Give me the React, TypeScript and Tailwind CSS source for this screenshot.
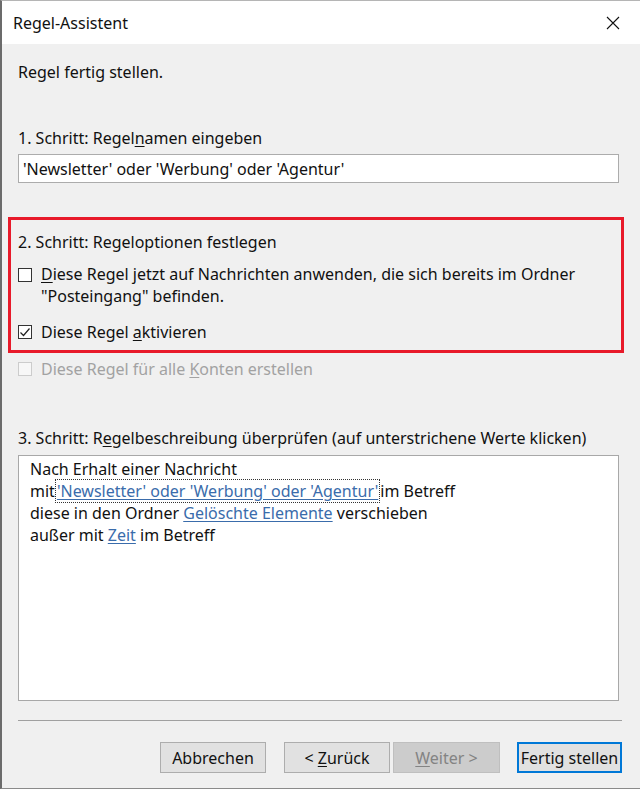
import React from "react";

const font = { fontFamily: '"Noto Sans", "Open Sans", sans-serif' };

function Box({ checked, disabled }: { checked?: boolean; disabled?: boolean }) {
  return (
    <div
      className={
        "w-[14px] h-[14px] shrink-0 border flex items-center justify-center " +
        (disabled ? "border-[#cccccc] bg-[#f7f7f7]" : "border-[#333333] bg-white")
      }
    >
      {checked && (
        <svg width="12" height="12" viewBox="0 0 12 12">
          <polyline points="1.5,6.5 4.5,9.5 10.5,2.5" fill="none" stroke="#222" strokeWidth="1.2" />
        </svg>
      )}
    </div>
  );
}

export default function App() {
  return (
    <div
      style={font}
      className="w-[640px] h-[789px] bg-[#f0f0f0] border-l-2 border-l-[#6b6b6b] border-t border-t-[#b5b5b5] border-b border-b-[#8a8a8a] flex flex-col text-[16px] leading-[22px] text-[#111]"
    >
      <div className="h-[43px] bg-white flex items-center justify-between pl-[11px] pr-[20px] shrink-0">
        <span className="text-[16px]">Regel-Assistent</span>
        <svg width="14" height="14" viewBox="0 0 14 14">
          <path d="M1 1 L13 13 M13 1 L1 13" stroke="#111" strokeWidth="1.1" />
        </svg>
      </div>
      <div className="flex flex-col pl-[16px] pr-[18px] pt-[17px]">
        <div>Regel fertig stellen.</div>
        <div className="mt-[44px]">
          1. Schritt: Regel<span className="underline underline-offset-2">n</span>amen eingeben
        </div>
        <div className="mt-[5px] mr-[3px] h-[29px] bg-white border border-[#acacac] flex items-center pl-[4px]">
          'Newsletter' oder 'Werbung' oder 'Agentur'
        </div>
        <div className="mt-[34px] -ml-[10px] -mr-[2px] border-[3px] border-[#e81a2a] pl-[7px] pt-[11px] pb-[7px]">
          <div>2. Schritt: Regeloptionen festlegen</div>
          <div className="mt-[10px] flex gap-[9px]">
            <div className="pt-[5px]">
              <Box />
            </div>
            <div>
              <span className="underline underline-offset-2">D</span>iese Regel jetzt auf Nachrichten anwenden, die sich bereits im Ordner
              <br />
              "Posteingang" befinden.
            </div>
          </div>
          <div className="mt-[14px] flex gap-[9px] items-center">
            <Box checked />
            <div>
              Diese Regel <span className="underline underline-offset-2">a</span>ktivieren
            </div>
          </div>
        </div>
        <div className="mt-[5px] flex gap-[9px] items-center text-[#a2a2a2]">
          <Box disabled />
          <div>
            Diese Regel für alle <span className="underline underline-offset-2">K</span>onten erstellen
          </div>
        </div>
        <div className="mt-[47px]">
          3. Schritt: R<span className="underline underline-offset-2">e</span>gelbeschreibung überprüfen (auf unterstrichene Werte klicken)
        </div>
        <div className="mt-[6px] mr-[3px] h-[246px] bg-white border border-[#a8a8a8] pl-[11px] pt-[2px]">
          <div>Nach Erhalt einer Nachricht</div>
          <div>
            mit
            <span className="border border-dotted border-[#333] text-[#3a6cab] underline underline-offset-2 px-[1px]">
              'Newsletter' oder 'Werbung' oder 'Agentur'
            </span>
            im Betreff
          </div>
          <div>
            diese in den Ordner <span className="text-[#3a6cab] underline underline-offset-2">Gelöschte Elemente</span> verschieben
          </div>
          <div>
            außer mit <span className="text-[#3a6cab] underline underline-offset-2">Zeit</span> im Betreff
          </div>
        </div>
        <div className="mt-[19px] h-px bg-[#a0a0a0]" />
        <div className="mt-[21px] flex justify-end">
          <button className="w-[106px] h-[31px] bg-[#e1e1e1] border border-[#adadad]">Abbrechen</button>
          <button className="ml-[18px] w-[106px] h-[31px] bg-[#e1e1e1] border border-[#adadad]">
            &lt; <span className="underline underline-offset-2">Z</span>urück
          </button>
          <button className="ml-[3px] w-[107px] h-[31px] bg-[#cccccc] border border-[#bfbfbf] text-[#838383]">
            <span className="underline underline-offset-2">W</span>eiter &gt;
          </button>
          <button className="ml-[17px] w-[105px] h-[31px] bg-[#e1e1e1] border-2 border-[#0078d7]">Fertig stellen</button>
        </div>
      </div>
    </div>
  );
}
